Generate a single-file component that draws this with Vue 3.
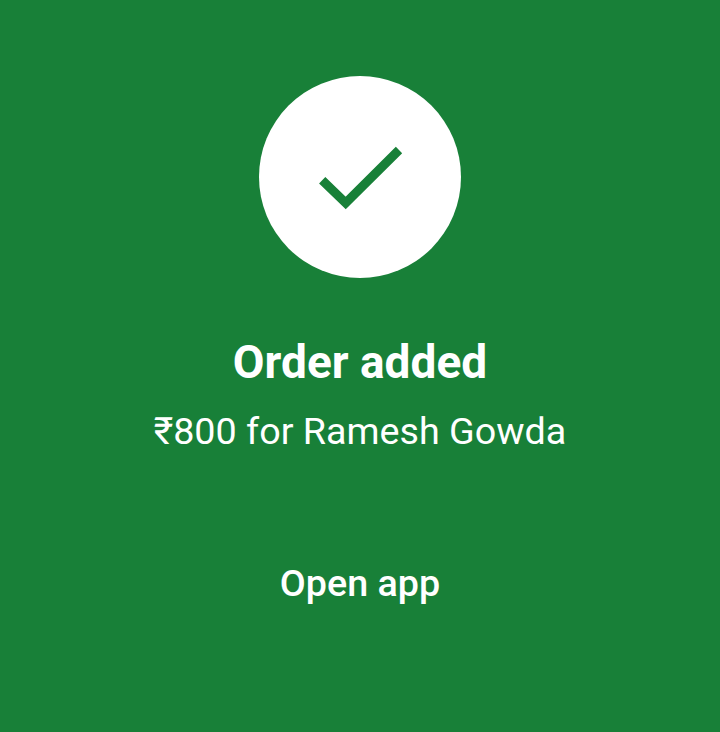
<template>
  <main class="screen">
    <div class="badge">
      <svg class="tick" width="88" height="68" viewBox="0 0 88 68">
        <path d="M6.2 37.3 L29.7 60 L83 7" fill="none" stroke="#188038" stroke-width="9" />
      </svg>
    </div>
    <h1 class="title">Order added</h1>
    <p class="detail">₹800 for Ramesh Gowda</p>
    <button class="open" type="button">Open app</button>
  </main>
</template>

<script setup>
</script>

<style scoped>
.screen {
  width: 720px;
  height: 732px;
  box-sizing: border-box;
  padding-top: 76px;
  background: #188038;
  color: #fff;
  font-family: Roboto, sans-serif;
  display: flex;
  flex-direction: column;
  align-items: center;
}

.badge {
  width: 202px;
  height: 202px;
  border-radius: 50%;
  background: #fff;
  display: flex;
  align-items: center;
  justify-content: center;
}

.title {
  margin: 54px 0 0;
  font-size: 46px;
  line-height: 60px;
  font-weight: 700;
  white-space: nowrap;
}

.detail {
  margin: 14px 0 0;
  font-size: 37.7px;
  line-height: 50px;
  font-weight: 400;
  white-space: nowrap;
}

.open {
  margin-top: 102px;
  padding: 0;
  border: 0;
  background: none;
  color: inherit;
  font: 500 37.7px/50px Roboto, sans-serif;
}
</style>

<style>
body {
  background: #188038;
}
</style>
